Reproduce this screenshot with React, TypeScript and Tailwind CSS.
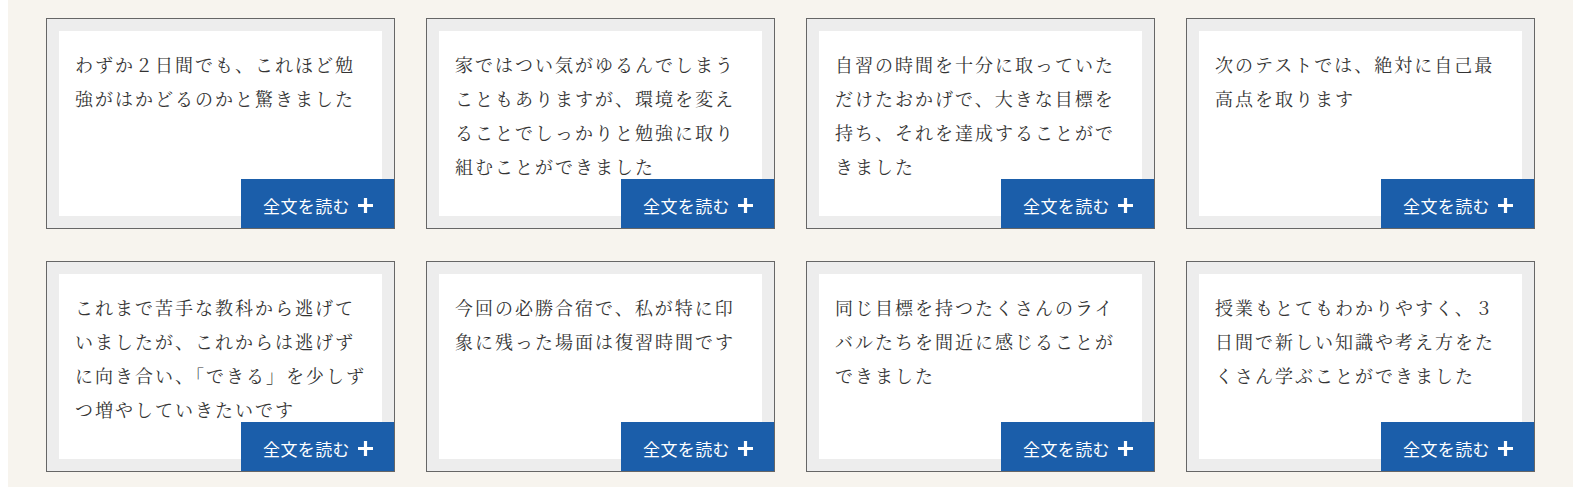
const voices: string[][] = [
  ['わずか２日間でも、これほど勉', '強がはかどるのかと驚きました'],
  ['家ではつい気がゆるんでしまう', 'こともありますが、環境を変え', 'ることでしっかりと勉強に取り', '組むことができました'],
  ['自習の時間を十分に取っていた', 'だけたおかげで、大きな目標を', '持ち、それを達成することがで', 'きました'],
  ['次のテストでは、絶対に自己最', '高点を取ります'],
  ['これまで苦手な教科から逃げて', 'いましたが、これからは逃げず', 'に向き合い、「できる」を少しず', 'つ増やしていきたいです'],
  ['今回の必勝合宿で、私が特に印', '象に残った場面は復習時間です'],
  ['同じ目標を持つたくさんのライ', 'バルたちを間近に感じることが', 'できました'],
  ['授業もとてもわかりやすく、３', '日間で新しい知識や考え方をた', 'くさん学ぶことができました'],
];

function PlusIcon() {
  return (
    <svg width="15" height="15" viewBox="0 0 15 15" className="h-[15px] w-[15px] shrink-0">
      <path d="M7.5 0V15M0 7.5H15" stroke="#fff" strokeWidth="3.2" />
    </svg>
  );
}

function VoiceCard({ lines }: { lines: string[] }) {
  return (
    <div className="relative h-[211px] border border-[#666] bg-[#ededed] p-3">
      <div className="h-full bg-white px-4 pt-4">
        <p className="whitespace-nowrap text-[18px] leading-[34px] tracking-[2px] text-[#333] font-['Noto_Serif_CJK_JP','Liberation_Serif','Noto_Sans_CJK_JP',serif]">
          {lines.map((l, i) => (
            <span key={i} className="block">
              {l}
            </span>
          ))}
        </p>
      </div>
      <button className="absolute bottom-0 right-0 flex h-[49px] w-[153px] items-center gap-[8px] bg-[#1b5eaa] pl-[22px] pt-[4px] text-[17px] tracking-[0.4px] text-white font-['Noto_Sans_CJK_JP',sans-serif]">
        <span>全文を読む</span>
        <PlusIcon />
      </button>
    </div>
  );
}

export default function App() {
  return (
    <div className="h-[487px] w-full bg-white pl-2 pr-[14px]">
      <div className="h-full bg-[#f7f4ee] px-[38px] pt-[18px]">
        <div className="grid grid-cols-4 gap-x-[31px] gap-y-[32px]">
          {voices.map((v, i) => (
            <VoiceCard key={i} lines={v} />
          ))}
        </div>
      </div>
    </div>
  );
}
